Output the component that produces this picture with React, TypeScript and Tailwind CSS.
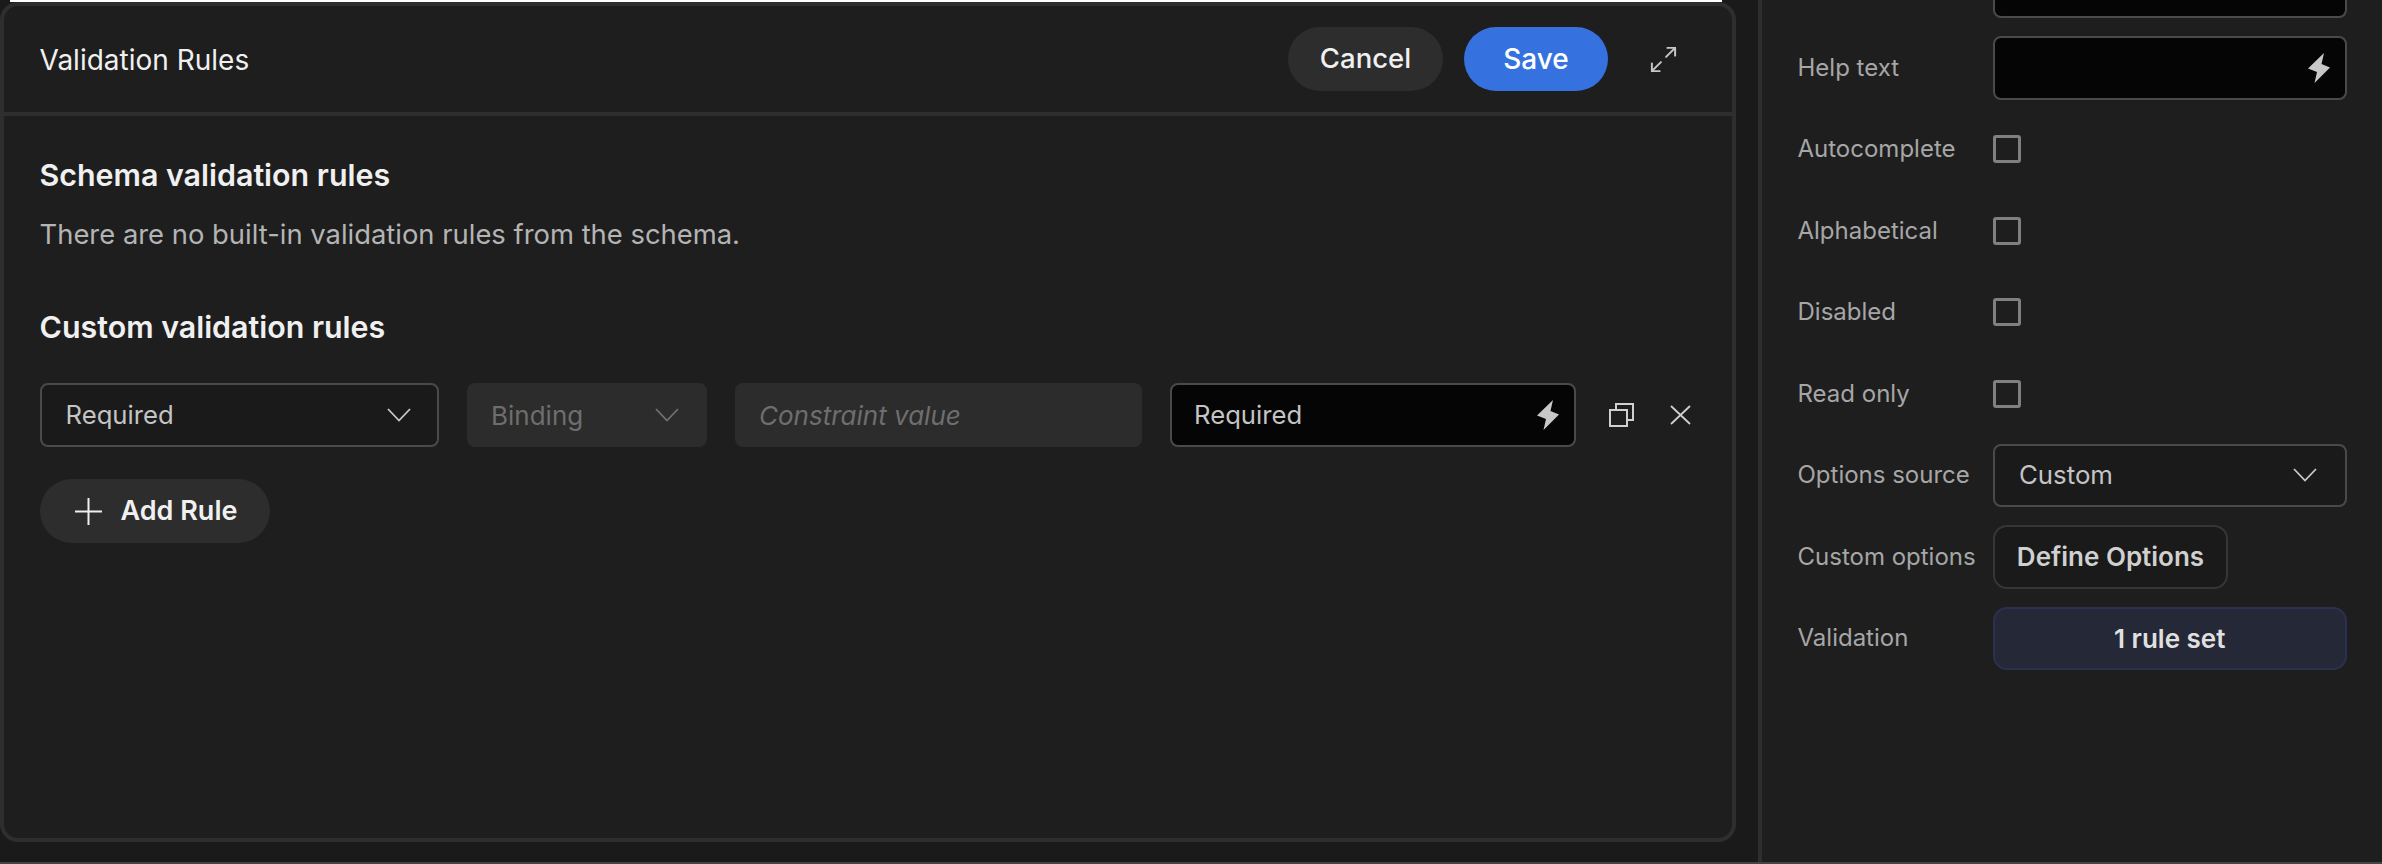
import { Maximize2 } from 'lucide-react'

function Bolt({ className }: { className: string }) {
    return (
        <svg viewBox="0 0 22 30" className={className} fill="currentColor">
            <path d="M16 0 L13.5 11 L22 14.5 L6.5 30 L9 19 L0 15.5 Z" />
        </svg>
    )
}

function Chevron({ className }: { className: string }) {
    return (
        <svg viewBox="0 0 24 14" className={className} fill="none" stroke="currentColor" strokeWidth="1.8">
            <path d="M1 1 L12 12.5 L23 1" />
        </svg>
    )
}

function PropRow({ label, children }: { label: string; children: React.ReactNode }) {
    return (
        <div className="flex items-center h-[63.5px] shrink-0">
            <div className="w-[195.5px] shrink-0 text-[24px] text-[#a6a6a6]">{label}</div>
            {children}
        </div>
    )
}

function Checkbox() {
    return <div className="w-[28px] h-[28px] rounded-[3px] border-[3px] border-[#808080]" />
}

export default function App() {
    return (
        <div className="flex w-[2382px] h-[864px] overflow-hidden bg-[#1a1a1a] border-b-[2px] border-[#444444] font-['Inter',sans-serif]">
            <div className="w-[1736px] shrink-0">
                <div className="h-[2px] ml-[10px] w-[1712px] bg-white" />
                <div className="h-[840px] flex flex-col bg-[#1e1e1e] border-[4px] border-[#2e2e2e] rounded-[18px]">
                    <div className="h-[110px] shrink-0 flex items-center pl-[35.5px] pr-[53px] border-b-[4px] border-[#2e2e2e]">
                        <div className="text-[28px] pt-[2px] text-[#f0f0f0] mr-auto">Validation Rules</div>
                        <button className="w-[155px] h-[64px] rounded-full bg-[#2d2d2d] text-[27.5px] font-medium text-[#f0f0f0]">Cancel</button>
                        <button className="w-[144px] h-[64px] ml-[21px] rounded-full bg-[#3572e0] text-[28px] font-medium text-white">Save</button>
                        <Maximize2 className="ml-[40px] w-[31px] h-[31px] text-[#c8c8c8]" strokeWidth={1.5} />
                    </div>
                    <div className="flex-1 pl-[35.5px] pr-[36px] pt-[37px]">
                        <div className="text-[30.4px] font-semibold leading-[44px] text-[#f0f0f0]">Schema validation rules</div>
                        <div className="text-[27.4px] leading-[40px] mt-[17px] text-[#b4b4b4]">There are no built-in validation rules from the schema.</div>
                        <div className="text-[30.4px] font-semibold leading-[44px] mt-[51px] text-[#f0f0f0]">Custom validation rules</div>
                        <div className="flex items-center mt-[34px] h-[64px]">
                            <div className="w-[399px] h-[64px] shrink-0 flex items-center justify-between pl-[24px] pr-[26px] bg-[#1a1a1a] border-2 border-[#4a4a4a] rounded-[8px] text-[25.7px] text-[#c4c4c4]">
                                Required
                                <Chevron className="w-[24px] h-[14px] text-[#c8c8c8]" />
                            </div>
                            <div className="ml-[28.5px] w-[240px] h-[64px] shrink-0 flex items-center justify-between pl-[24px] pr-[28px] bg-[#2c2c2c] rounded-[8px] text-[26px] text-[#6e6e6e]">
                                Binding
                                <Chevron className="w-[24px] h-[14px] text-[#707070]" />
                            </div>
                            <div className="ml-[28px] w-[407px] h-[64px] shrink-0 flex items-center pl-[24px] bg-[#2c2c2c] rounded-[8px] text-[26px] italic text-[#6e6e6e]">
                                Constraint value
                            </div>
                            <div className="ml-[28px] w-[406px] h-[64px] shrink-0 flex items-center justify-between pl-[22px] pr-[15px] bg-[#050505] border-2 border-[#4a4a4a] rounded-[8px] text-[25.7px] text-[#c4c4c4]">
                                Required
                                <Bolt className="w-[22px] h-[30px] text-[#c8c8c8]" />
                            </div>
                            <svg viewBox="0 0 25 24" className="ml-[33px] w-[25px] h-[24px] text-[#d0d0d0]" fill="none" stroke="currentColor" strokeWidth="2">
                                <rect x="1" y="7" width="17" height="16" />
                                <path d="M7 7 V1 H24 V17 H18" />
                            </svg>
                            <svg viewBox="0 0 21 20" className="ml-[36px] w-[21px] h-[20px] text-[#d0d0d0]" fill="none" stroke="currentColor" strokeWidth="1.8">
                                <path d="M1 1 L20 19 M20 1 L1 19" />
                            </svg>
                        </div>
                        <button className="mt-[32px] w-[230px] h-[64px] flex items-center pl-[35px] rounded-full bg-[#2d2d2d] text-[27px] font-semibold text-[#f0f0f0]">
                            <svg viewBox="0 0 27 27" className="w-[27px] h-[27px] mr-[19px]" fill="none" stroke="currentColor" strokeWidth="2">
                                <path d="M13.5 0 V27 M0 13.5 H27" />
                            </svg>
                            Add Rule
                        </button>
                    </div>
                </div>
            </div>
            <div className="ml-[22px] w-[4px] shrink-0 bg-[#2e2e2e]" />
            <div className="flex-1 bg-[#1e1e1e] pl-[35.5px] pr-[35.5px] flex flex-col gap-[18px]">
                <div className="-mt-[45.5px]">
                    <PropRow label="">
                        <div className="flex-1 h-full bg-[#050505] border-2 border-[#4a4a4a] rounded-[8px]" />
                    </PropRow>
                </div>
                <PropRow label="Help text">
                    <div className="flex-1 h-full flex items-center justify-end pr-[15px] bg-[#050505] border-2 border-[#4a4a4a] rounded-[8px]">
                        <Bolt className="w-[22px] h-[30px] text-[#c8c8c8]" />
                    </div>
                </PropRow>
                <PropRow label="Autocomplete"><Checkbox /></PropRow>
                <PropRow label="Alphabetical"><Checkbox /></PropRow>
                <PropRow label="Disabled"><Checkbox /></PropRow>
                <PropRow label="Read only"><Checkbox /></PropRow>
                <PropRow label="Options source">
                    <div className="flex-1 h-full flex items-center justify-between pl-[24px] pr-[28px] bg-[#1a1a1a] border-2 border-[#4a4a4a] rounded-[8px] text-[25.8px] text-[#c4c4c4]">
                        Custom
                        <Chevron className="w-[24px] h-[14px] text-[#c8c8c8]" />
                    </div>
                </PropRow>
                <PropRow label="Custom options">
                    <div className="w-[235px] h-full flex items-center justify-center bg-[#1a1a1a] border-2 border-[#363636] rounded-[14px] text-[26px] font-semibold text-[#d0d0d0]">
                        Define Options
                    </div>
                </PropRow>
                <PropRow label="Validation">
                    <div className="flex-1 h-full flex items-center justify-center bg-[#252836] border-2 border-[#2b3050] rounded-[14px] text-[26px] font-semibold text-[#e0e0e0]">
                        1 rule set
                    </div>
                </PropRow>
            </div>
        </div>
    )
}
